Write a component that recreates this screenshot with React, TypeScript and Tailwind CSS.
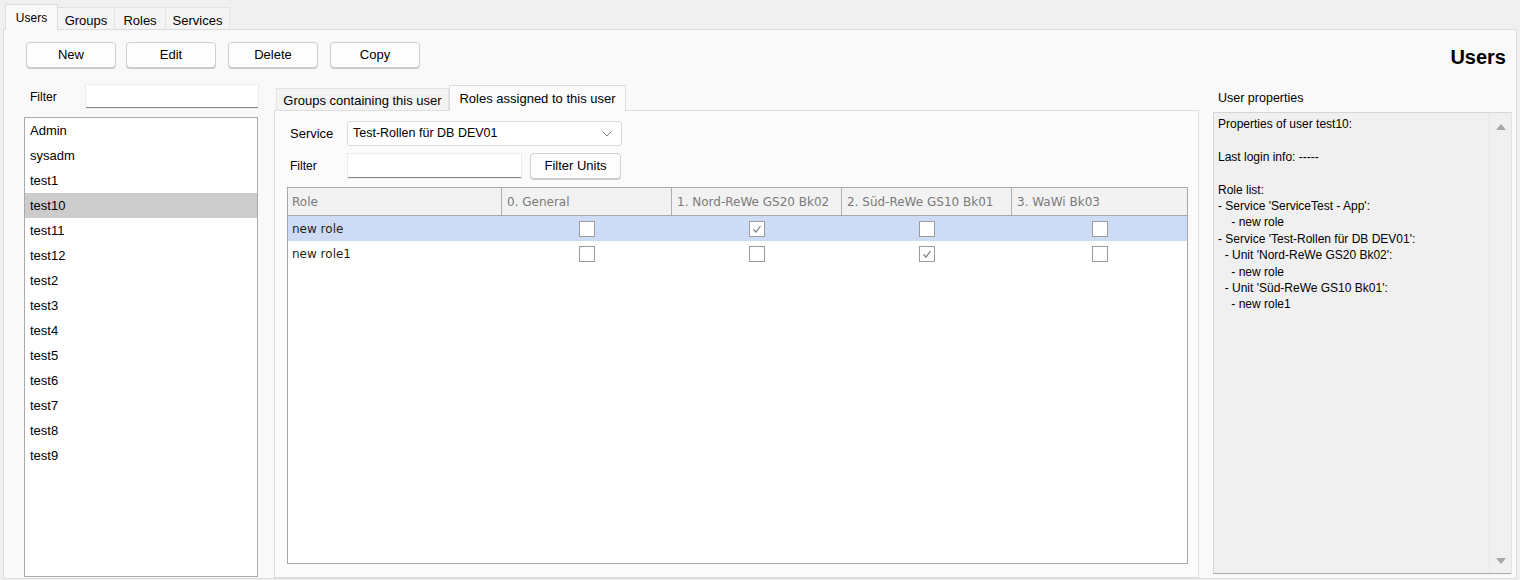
import React from "react";

const users = ["Admin", "sysadm", "test1", "test10", "test11", "test12", "test2", "test3", "test4", "test5", "test6", "test7", "test8", "test9"];

const units = ["0. General", "1. Nord-ReWe GS20 Bk02", "2. Süd-ReWe GS10 Bk01", "3. WaWi Bk03"];

const roles = [
  { name: "new role", checks: [false, true, false, false], selected: true },
  { name: "new role1", checks: [false, false, true, false], selected: false },
];

const propLines = [
  "Properties of user test10:",
  "",
  "Last login info: -----",
  "",
  "Role list:",
  "- Service 'ServiceTest - App':",
  "    - new role",
  "- Service 'Test-Rollen für DB DEV01':",
  "  - Unit 'Nord-ReWe GS20 Bk02':",
  "    - new role",
  "  - Unit 'Süd-ReWe GS10 Bk01':",
  "    - new role1",
];

function Check({ checked }: { checked: boolean }) {
  return (
    <div className="w-[16px] h-[16px] border border-[#9a9a9a] bg-white flex items-center justify-center">
      {checked && (
        <svg width="12" height="12" viewBox="0 0 12 12">
          <path d="M2.5 6.5 L5 9 L9.5 3" fill="none" stroke="#7a7a7a" strokeWidth="1.2" />
        </svg>
      )}
    </div>
  );
}

function Button({ label, w = "w-[90px]" }: { label: string; w?: string }) {
  return (
    <div className={`${w} h-[26px] flex items-center justify-center rounded-[4px] border border-[#d0d0d0] bg-[#fdfdfd] shadow-[0_1px_0_#c8c8c8] text-[13px]`}>
      {label}
    </div>
  );
}

export default function App() {
  return (
    <div className="w-[1520px] h-[580px] overflow-hidden bg-[#f0f0f0] text-[12px] text-black font-['Liberation_Sans',Arial,sans-serif] flex flex-col">
      {/* top tabs */}
      <div className="h-[29px] flex items-end pl-[5px] shrink-0">
        <div className="w-[53px] h-[26px] pt-[4px] text-center bg-[#f9f9f9] border border-b-0 border-[#dcdcdc] relative top-px">Users</div>
        <div className="w-[57px] h-[22px] pt-[3px] text-center text-[13px] bg-[#f4f4f4] border border-l-0 border-b-0 border-[#e3e3e3]">Groups</div>
        <div className="w-[51px] h-[22px] pt-[3px] text-center text-[13px] bg-[#f4f4f4] border border-l-0 border-b-0 border-[#e3e3e3]">Roles</div>
        <div className="w-[64px] h-[22px] pt-[3px] text-center text-[13px] bg-[#f4f4f4] border border-l-0 border-b-0 border-[#e3e3e3]">Services</div>
      </div>

      <div className="flex-1 mx-[3px] mb-[1px] border border-[#dcdcdc] bg-[#f9f9f9] flex flex-col min-h-0">
        {/* toolbar */}
        <div className="flex items-start pt-[12px] pl-[22px] pr-[10px] h-[50px] shrink-0">
          <div className="flex gap-[10px] items-center">
            <Button label="New" />
            <Button label="Edit" />
            <div className="ml-[2px]"><Button label="Delete" /></div>
            <div className="ml-[2px]"><Button label="Copy" /></div>
          </div>
          <div className="ml-auto text-[20px] font-bold mt-[1px] leading-[28px]">Users</div>
        </div>

        {/* main */}
        <div className="flex-1 flex min-h-0 pl-[20px] pt-[4px]">
          {/* left column */}
          <div className="w-[234px] flex flex-col pb-[1px]">
            <div className="flex items-center h-[23px] mt-px">
              <div className="w-[62px] pl-[6px]">Filter</div>
              <div className="flex-1 h-[23px] bg-white border-b border-[#8a8a8a] shadow-[0_0_0_1px_#ececec]" />
            </div>
            <div className="flex-1 mt-[9px] bg-white border border-[#aaaaaa] text-[13px]">
              {users.map((u) => (
                <div key={u} className={`h-[25px] flex items-center pl-[5px] ${u === "test10" ? "bg-[#cccccc]" : ""}`}>{u}</div>
              ))}
            </div>
          </div>

          {/* middle column */}
          <div className="w-[925px] ml-[16px] flex flex-col">
            <div className="flex items-end h-[26px] pl-[2px] text-[13px]">
              <div className="w-[173px] h-[22px] pt-[2px] text-center bg-[#f3f3f3] border border-b-0 border-[#e3e3e3]">Groups containing this user</div>
              <div className="w-[177px] h-[26px] pt-[3px] text-center bg-[#fbfbfb] border border-b-0 border-[#dcdcdc] relative top-px">Roles assigned to this user</div>
            </div>
            <div className="flex-1 border border-[#dedede] bg-[#fbfbfb] flex flex-col pl-[12px] pr-[10px] pb-[13px]">
              <div className="flex items-center mt-[10px] h-[25px]">
                <div className="w-[60px] pl-[3px] text-[13px]">Service</div>
                <div className="w-[275px] h-[25px] bg-white border border-[#dadada] rounded-[3px] flex items-center pl-[5px] pr-[8px] text-[12.5px]">
                  <span>Test-Rollen für DB DEV01</span>
                  <svg className="ml-auto" width="12" height="8" viewBox="0 0 12 8">
                    <path d="M1.5 1.5 L6 6 L10.5 1.5" fill="none" stroke="#7a7a7a" strokeWidth="1" />
                  </svg>
                </div>
              </div>
              <div className="flex items-center mt-[7px] h-[25px]">
                <div className="w-[61px] pl-[3px]">Filter</div>
                <div className="w-[173px] h-[24px] bg-white border-b border-[#8a8a8a] shadow-[0_0_0_1px_#ececec]" />
                <div className="ml-[9px]"><Button label="Filter Units" w="w-[91px]" /></div>
              </div>
              <div className="flex-1 mt-[9px] bg-white border border-[#a8a8a8] flex flex-col font-['DejaVu_Sans',Verdana,sans-serif] text-[12px]">
                <div className="flex h-[28px] bg-[#f2f2f2] border-b border-[#a8a8a8] text-[#7a7a7a]">
                  <div className="w-[214px] border-r border-[#b0b0b0] flex items-center pl-[4px]">Role</div>
                  {units.map((u, i) => (
                    <div key={u} className={`${i === 3 ? "flex-1" : "w-[170px] border-r border-[#b0b0b0]"} flex items-center pl-[5px]`}>{u}</div>
                  ))}
                </div>
                {roles.map((r) => (
                  <div key={r.name} className={`flex h-[25px] text-[#1e1e1e] ${r.selected ? "bg-[#cddcf4]" : ""}`}>
                    <div className="w-[214px] flex items-center pl-[4px]">{r.name}</div>
                    {r.checks.map((c, i) => (
                      <div key={i} className={`${i === 3 ? "flex-1" : "w-[170px]"} flex items-center justify-center`}>
                        <Check checked={c} />
                      </div>
                    ))}
                  </div>
                ))}
              </div>
            </div>
          </div>

          {/* right column */}
          <div className="w-[298px] ml-[14px] flex flex-col pb-[4px]">
            <div className="h-[28px] pl-[5px] pt-[1px] flex items-center text-[12.5px]">User properties</div>
            <div className="flex-1 flex bg-[#f0f0f0] border-l border-t border-[#d6d6d6] border-b border-b-[#a8a8a8] shadow-[1px_0_0_#e4e4e4]">
              <div className="flex-1 pl-[4px] pt-[3px] leading-[16.4px] whitespace-pre">
                {propLines.map((l, i) => (
                  <div key={i} className="h-[16.4px]">{l}</div>
                ))}
              </div>
              <div className="w-[22px] border-l border-[#e6e6e6] flex flex-col items-center justify-between pt-[11px] pb-[9px]">
                <svg width="10" height="6" viewBox="0 0 10 6"><path d="M0 6 L5 0 L10 6 Z" fill="#a6a6a6" /></svg>
                <svg width="10" height="6" viewBox="0 0 10 6"><path d="M0 0 L5 6 L10 0 Z" fill="#a6a6a6" /></svg>
              </div>
            </div>
          </div>
        </div>
      </div>
    </div>
  );
}
